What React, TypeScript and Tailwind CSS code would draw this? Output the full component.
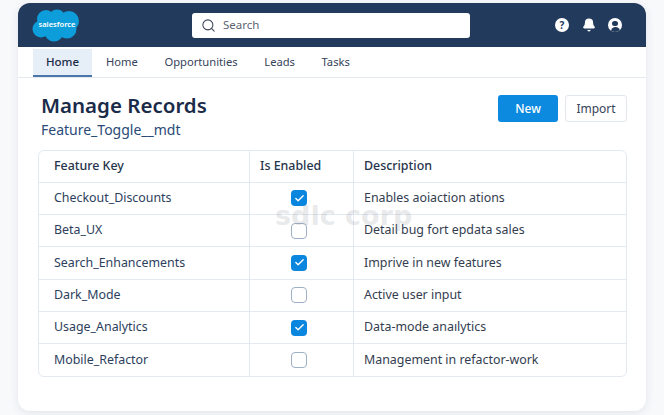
import { Bell, Check, Search } from 'lucide-react';

const rows = [
  { key: 'Checkout_Discounts', on: true, desc: 'Enables aoiaction ations' },
  { key: 'Beta_UX', on: false, desc: 'Detail bug fort epdata sales' },
  { key: 'Search_Enhancements', on: true, desc: 'Imprive in new features' },
  { key: 'Dark_Mode', on: false, desc: 'Active user input' },
  { key: 'Usage_Analytics', on: true, desc: 'Data-mode anaılytics' },
  { key: 'Mobile_Refactor', on: false, desc: 'Management in refactor-work' },
];

const tabs = ['Home', 'Opportunities', 'Leads', 'Tasks'];

function Logo() {
  return (
    <div className="relative h-[34px] w-[50px] shrink-0">
      <svg viewBox="0 0 50 34" className="h-full w-full">
        <g fill="#0d9dda">
          <circle cx="14" cy="11" r="9" />
          <circle cx="25" cy="10" r="8.5" />
          <circle cx="37" cy="13" r="10" />
          <circle cx="9" cy="21" r="8.5" />
          <circle cx="22" cy="24" r="9.5" />
          <circle cx="35" cy="21" r="9.5" />
        </g>
      </svg>
      <span className="absolute inset-0 flex items-center justify-center text-[7.5px] font-semibold text-white">
        salesforce
      </span>
    </div>
  );
}

function Toggle({ on }: { on: boolean }) {
  if (on) {
    return (
      <span className="flex h-4 w-4 items-center justify-center rounded-[4px] bg-[#0b86de]">
        <Check size={11} strokeWidth={3} className="text-white" />
      </span>
    );
  }
  return <span className="h-4 w-4 rounded-[4px] border border-[#9fb0c6] bg-white" />;
}

export default function App() {
  return (
    <div className="h-[415px] w-[664px] overflow-hidden bg-[#f8f9fb] px-[18px] pt-[3px] font-['Noto_Sans',sans-serif] text-[#26344b]">
      <div className="h-[408px] overflow-hidden rounded-xl bg-white shadow-[0_2px_10px_rgba(30,50,90,0.1)]">
        <header className="flex h-[44px] items-center bg-[#223a5c] pl-[14px] pr-[24px]">
          <Logo />
          <div className="ml-[110px] flex h-[25px] w-[278px] items-center gap-[7px] rounded-[3px] bg-white pl-[9px]">
            <Search size={15} strokeWidth={1.7} className="text-[#3b4556]" />
            <span className="text-[11.5px] text-[#5b6472]">Search</span>
          </div>
          <div className="ml-auto flex items-center gap-[12.5px]">
            <span className="flex h-[14px] w-[14px] items-center justify-center rounded-full bg-white text-[10px] font-bold leading-none text-[#223a5c]">
              ?
            </span>
            <Bell size={14} fill="white" className="text-white" />
            <span className="relative h-[14px] w-[14px] overflow-hidden rounded-full bg-white">
              <span className="absolute left-[4px] top-[2.5px] h-[5.5px] w-[6px] rounded-full bg-[#223a5c]" />
              <span className="absolute left-[2.5px] top-[8.5px] h-[6px] w-[9px] rounded-t-full bg-[#223a5c]" />
            </span>
          </div>
        </header>

        <nav className="flex h-[31px] items-stretch border-b border-[#e3e8f1] pl-[15px] text-[11.2px] text-[#36435a]">
          <div className="mt-[2px] flex w-[59px] items-center justify-center border-b-2 border-[#4a76a8] bg-[#e6eef8] text-[11.5px] font-medium text-[#1c2c47]">
            Home
          </div>
          <div className="ml-[14px] flex items-center gap-[26.6px]">
            {tabs.map((tab) => (
              <span key={tab}>{tab}</span>
            ))}
          </div>
        </nav>

        <section className="relative px-5 pt-[12px]">
          <div className="flex items-start justify-between">
            <div className="pl-[3px]">
              <h1 className="text-[20.5px] font-semibold leading-[30px] text-[#1a2b49]">Manage Records</h1>
              <p className="text-[14px] leading-[20px] text-[#2a4a78]">Feature_Toggle__mdt</p>
            </div>
            <div className="-mr-px mt-[5px] flex gap-[7px]">
              <button className="h-[27px] w-[60px] rounded-[3px] bg-[#0b8ae0] text-[12px] font-medium text-white">
                New
              </button>
              <button className="h-[27px] w-[62px] rounded-[3px] border border-[#e2e6ee] bg-white text-[12px] text-[#36435a]">
                Import
              </button>
            </div>
          </div>

          <div className="mt-[10px] w-[589px] overflow-hidden rounded-md border border-[#e3e8f1] text-[12.4px]">
            <div className="grid h-[30.5px] grid-cols-[210px_104px_1fr] items-stretch font-medium text-[#26344b]">
              <div className="flex items-center pl-[15px]">Feature Key</div>
              <div className="flex items-center border-l border-[#e3e8f1] pl-[10px]">Is Enabled</div>
              <div className="flex items-center border-l border-[#e3e8f1] pl-[10px]">Description</div>
            </div>
            {rows.map((row) => (
              <div
                key={row.key}
                className="grid h-[32.4px] grid-cols-[210px_104px_1fr] items-stretch border-t border-[#e3e8f1]"
              >
                <div className="flex items-center pl-[15px] text-[#2c3e5c]">{row.key}</div>
                <div className="flex items-center border-l border-[#e3e8f1] pl-[41px]">
                  <Toggle on={row.on} />
                </div>
                <div className="flex items-center border-l border-[#e3e8f1] pl-[10px] text-[#333d4f]">{row.desc}</div>
              </div>
            ))}
          </div>

          <span className="absolute left-[257px] top-[118px] font-['DejaVu_Sans',sans-serif] text-[27px] font-bold text-[#8a8f99]/20">
            sdlc corp
          </span>
        </section>
      </div>
    </div>
  );
}
